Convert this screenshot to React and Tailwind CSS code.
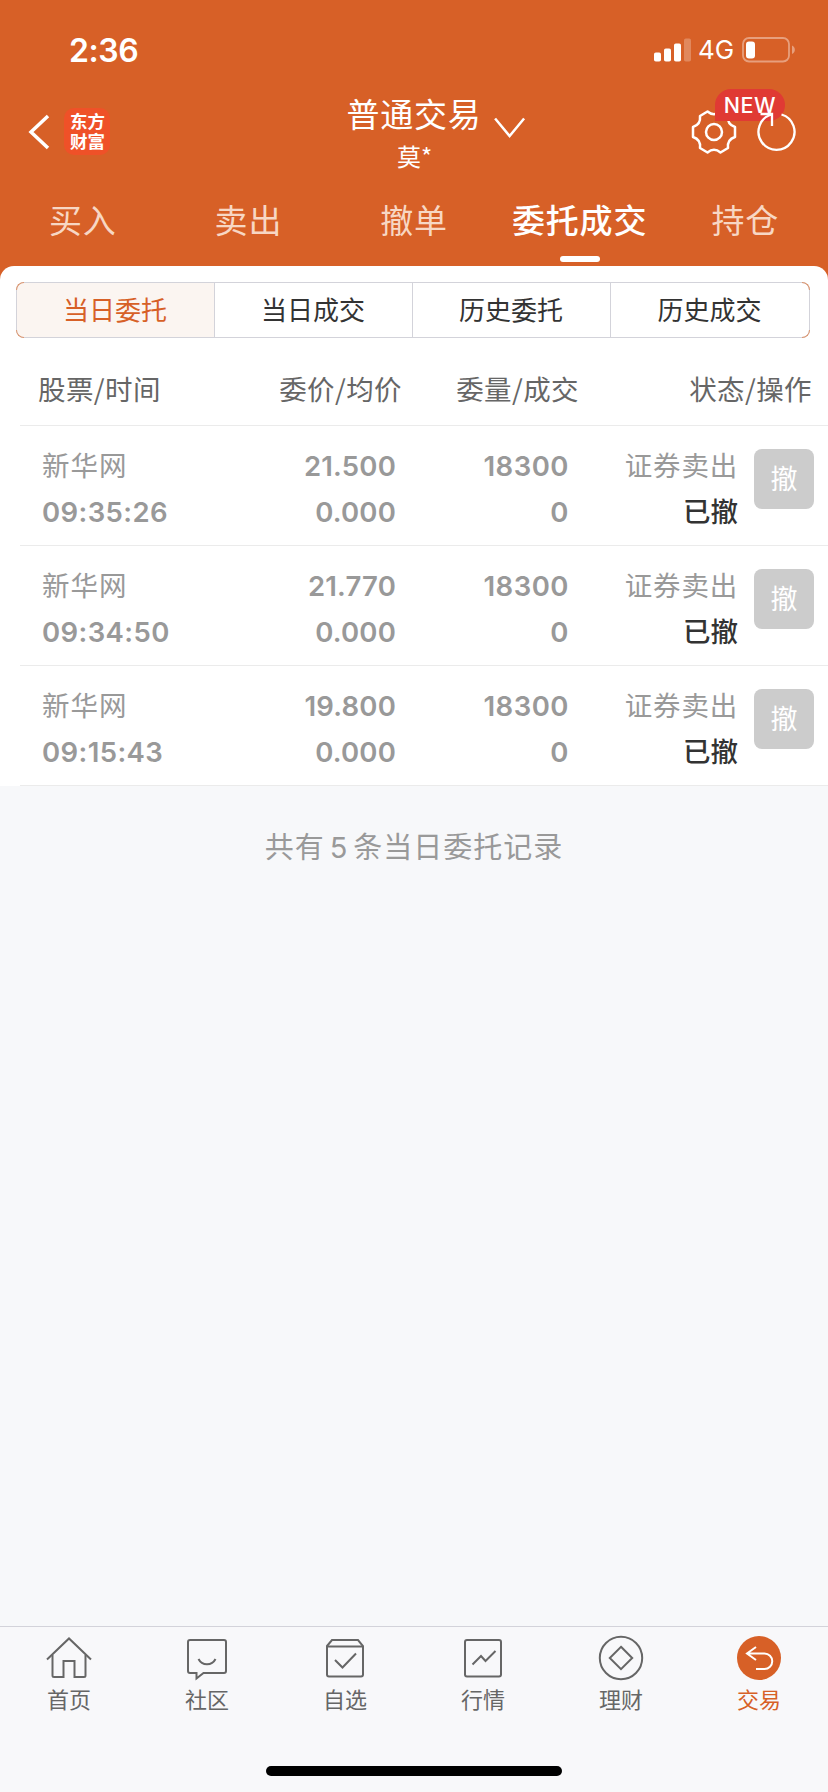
import React, { useState } from 'react';

const TABS = ['买入', '卖出', '撤单', '委托成交', '持仓'];
const FILTERS = ['当日委托', '当日成交', '历史委托', '历史成交'];

const ORDERS = [
  { id: 1, name: '新华网', time: '09:35:26', price: '21.500', avg: '0.000', qty: '18300', filled: '0' },
  { id: 2, name: '新华网', time: '09:34:50', price: '21.770', avg: '0.000', qty: '18300', filled: '0' },
  { id: 3, name: '新华网', time: '09:15:43', price: '19.800', avg: '0.000', qty: '18300', filled: '0' },
];

const NAV = [
  {
    label: '首页',
    icon: (
      <>
        <path d="M2 24.5 24 3.5l22 21" />
        <path d="M7.5 20v20.5a1.5 1.5 0 0 0 1.5 1.5h9.5V26h11v16H39a1.5 1.5 0 0 0 1.5-1.5V20" />
      </>
    ),
  },
  {
    label: '社区',
    icon: (
      <>
        <path d="M7 5h34a2 2 0 0 1 2 2v29a2 2 0 0 1-2 2H20.500l-7 5.500V38H7a2 2 0 0 1-2-2V7a2 2 0 0 1 2-2Z" />
        <path d="M15.500 24c3.500 7 13.500 7 17 0" />
      </>
    ),
  },
  {
    label: '自选',
    icon: (
      <>
        <path d="M6 11l5-6h26l5 6v28.500a2 2 0 0 1-2 2H8a2 2 0 0 1-2-2Z" />
        <path d="M6 11.500h36M14 25l7.500 7.500L35 18.500" />
      </>
    ),
  },
  {
    label: '行情',
    icon: (
      <>
        <rect x="6" y="5" width="36" height="36.500" rx="2" />
        <path d="M13.500 29.500l8.500-8.500 4.500 5 10-10" />
      </>
    ),
  },
  {
    label: '理财',
    icon: (
      <>
        <circle cx="24" cy="23" r="21.200" />
        <path d="M24 11.800 35.200 23 24 34.200 12.800 23Z" />
      </>
    ),
  },
];

function StatusBar() {
  return (
    <div className="h-[88px] flex items-start justify-between pl-[69px] pr-[33px] pt-[34px]">
      <span className="text-[32px] leading-[33px] font-semibold tracking-[-0.4px]">2:36</span>
      <div className="flex items-center h-8">
        <svg width="38" height="24" viewBox="0 0 38 24" fill="currentColor">
          <rect x="0" y="14.500" width="7" height="9" rx="1.800" />
          <rect x="10" y="10.500" width="7" height="13" rx="1.800" />
          <rect x="20" y="5.500" width="7" height="18" rx="1.800" />
          <rect x="30" y="0.500" width="7" height="23" rx="1.800" opacity="0.25" />
        </svg>
        <span className="ml-[6px] w-[43px] text-[26px] leading-8 font-normal">4G</span>
        <svg width="54" height="26" viewBox="0 0 54 26" className="relative left-px">
          <rect x="1" y="1" width="46" height="23.500" rx="6" fill="none" stroke="currentColor" strokeWidth="1.800" opacity="0.4" />
          <rect x="4" y="4.500" width="9" height="17" rx="3" fill="currentColor" />
          <path d="M50 8.500c3.800 1.500 3.800 7 0 8.500Z" fill="currentColor" opacity="0.4" />
        </svg>
      </div>
    </div>
  );
}

function TitleBar() {
  return (
    <div className="relative h-[88px] flex items-start justify-between pl-7 pr-10">
      <div className="flex items-start">
        <svg width="22" height="36" viewBox="0 0 22 36" className="mt-[26px]" fill="none" stroke="currentColor" strokeWidth="3.500">
          <path d="M20 2 3 18l17 16" />
        </svg>
        <div className="mt-5 ml-[14px] w-[46px] h-[47px] rounded-[10px] bg-[#ef5128] pt-1 pl-px text-center text-[17.500px] leading-5 font-bold">
          东方
          <br />
          财富
        </div>
      </div>

      {/* Account title */}
      <div className="absolute left-1/2 -translate-x-1/2 top-2 flex flex-col items-center">
        <div className="relative text-[33px] leading-[38px] font-normal tracking-[0.7px] whitespace-nowrap">
          普通交易
          <svg width="32" height="22" viewBox="0 0 32 22" className="absolute left-[147px] top-[21px]" fill="none" stroke="currentColor" strokeWidth="2.500">
            <path d="M1.500 1.500 16 19 30.500 1.500" />
          </svg>
        </div>
        <div className="mt-[7px] pl-px text-[24px] leading-[30px] font-normal font-['Noto_Sans_CJK_SC',sans-serif]">莫*</div>
      </div>

      <div className="relative flex mt-[21px]">
        <svg width="46" height="46" viewBox="0 0 46 46" fill="none" stroke="currentColor" strokeWidth="2.500" strokeLinejoin="round">
          <path d="M16.500 2.500Q23 8 29.500 2.500L37 7Q36 15.500 44 18V28Q36 30.500 37 39L29.500 43.500Q23 38 16.500 43.500L9 39Q10 30.500 2 28V18Q10 15.500 9 7Z" />
          <circle cx="23" cy="23" r="8" />
        </svg>
        <span className="absolute left-[24px] top-[-20px] w-[70px] h-[32px] rounded-2xl rounded-bl-none bg-[#e03a34] text-center text-[21.500px] leading-8 font-medium tracking-[0.5px]">
          NEW
        </span>
        <svg width="40" height="40" viewBox="0 0 40 40" className="relative ml-[20px] mr-[-9px] mt-[3px]" fill="none" stroke="currentColor" strokeWidth="2.300">
          <path d="M24.500 2.500A18 18 0 1 1 14.500 2.500" />
          <path d="M3.500 2H15v12" />
        </svg>
      </div>
    </div>
  );
}

export default function App() {
  const [tab, setTab] = useState('委托成交');
  const [filter, setFilter] = useState('当日委托');

  return (
    <div className="w-[828px] h-[1792px] flex flex-col overflow-hidden bg-[#f7f8fa] font-['Inter','Noto_Sans_CJK_SC',sans-serif]">
      {/* Header */}
      <header className="h-[280px] shrink-0 bg-[#d76027] text-white">
        <StatusBar />
        <TitleBar />
        <div className="grid grid-cols-5 h-[90px]">
          {TABS.map((t) => (
            <button key={t} onClick={() => setTab(t)} className="flex flex-col items-center pt-[25px]">
              <span className={`text-[33px] leading-10 tracking-[0.8px] whitespace-nowrap ${t === tab ? 'font-medium text-white' : 'font-normal text-[#f7d7c4]'}`}>
                {t}
              </span>
              {t === tab && <span className="mt-[15px] w-10 h-[6px] rounded-full bg-white" />}
            </button>
          ))}
        </div>
      </header>

      {/* Orders */}
      <main className="relative -mt-[14px] bg-white rounded-t-[14px] pt-4">
        <div className="relative ml-4 mr-[18px]">
          <div className="h-14 grid grid-cols-4 rounded-lg border border-[#d3d3da] overflow-hidden">
            {FILTERS.map((f) => (
              <button
                key={f}
                onClick={() => setFilter(f)}
                className={`text-[26px] leading-[55px] font-normal border-r border-[#d3d3da] pr-px last:border-r-0 ${f === filter ? 'bg-[#fbf5f1] text-[#d76027]' : 'text-[#333]'}`}
              >
                {f}
              </button>
            ))}
          </div>
          {/* tinted corners */}
          <span className="absolute left-0 top-0 size-2 rounded-tl-lg border-t border-l border-[#dc9670]" />
          <span className="absolute left-0 bottom-0 size-2 rounded-bl-lg border-b border-l border-[#dc9670]" />
          <span className="absolute right-0 top-0 size-2 rounded-tr-lg border-t border-r border-[#dc9670]" />
          <span className="absolute right-0 bottom-0 size-2 rounded-br-lg border-b border-r border-[#dc9670]" />
        </div>

        <div className="mt-[19px] h-[68px] flex pl-[38px] pr-[16px] text-[27.500px] leading-[62px] font-normal tracking-[0.4px] text-[#666] font-['Noto_Sans_CJK_SC',sans-serif]">
          <span className="w-[180px]">股票/时间</span>
          <span className="w-[184px] text-right">委价/均价</span>
          <span className="w-[177px] text-right">委量/成交</span>
          <span className="flex-1 text-right">状态/操作</span>
        </div>

        {ORDERS.map((o) => (
          <div key={o.id} className="ml-5 h-[120px] flex border-t border-[#ebebeb] pl-[22px] pr-[14px] pt-[17px] text-[27.500px] leading-[46px] text-[#999]">
            <div className="w-[180px]">
              <p className="tracking-[1px]">{o.name}</p>
              <p className="font-semibold tracking-[0.4px]">{o.time}</p>
            </div>
            <div className="w-[174px] text-right font-semibold tracking-[0.2px]">
              <p>{o.price}</p>
              <p>{o.avg}</p>
            </div>
            <div className="w-[173px] text-right font-semibold tracking-[0.5px]">
              <p>{o.qty}</p>
              <p>{o.filled}</p>
            </div>
            <div className="w-[169px] text-right">
              <p className="tracking-[0.8px]">证券卖出</p>
              <p className="font-medium text-[#333]">已撤</p>
            </div>
            <button className="ml-auto mt-[6px] size-[60px] rounded-lg bg-[#ccc] text-[27px] leading-[61px] font-normal text-white">
              撤
            </button>
          </div>
        ))}
        <div className="ml-5 border-t border-[#ebebeb]" />
      </main>

      <p className="mt-[37px] text-center text-[29px] leading-[44px] font-normal tracking-[1px] text-[#999] font-['Noto_Sans_CJK_SC',sans-serif]">
        共有<span className="mx-[5px] font-['Inter']">5</span>条当日委托记录
      </p>

      {/* Bottom nav */}
      <nav className="mt-auto h-[166px] border-t border-[#d3d3da] bg-[#f8f8fa]">
        <div className="grid grid-cols-6 text-[#666]">
          {NAV.map((n) => (
            <div key={n.label} className="flex flex-col items-center pt-2">
              <svg width="48" height="48" viewBox="0 0 48 48" fill="none" stroke="currentColor" strokeWidth="2">
                {n.icon}
              </svg>
              <span className="mt-[1px] text-[22px] leading-8 font-normal">{n.label}</span>
            </div>
          ))}
          <div className="flex flex-col items-center pt-2 text-[#d76027]">
            <svg width="48" height="48" viewBox="0 0 48 48" fill="none">
              <circle cx="24" cy="23" r="22" fill="currentColor" />
              <path d="M21 12l-9 6.500 9 6.500M12 18.500h17.500a7.500 7.500 0 0 1 0 15.500H21" stroke="white" strokeWidth="2" />
            </svg>
            <span className="mt-[1px] text-[22px] leading-8 font-normal">交易</span>
          </div>
        </div>
        <div className="mx-auto mt-[50px] w-[296px] h-[10px] rounded-full bg-black" />
      </nav>
    </div>
  );
}
